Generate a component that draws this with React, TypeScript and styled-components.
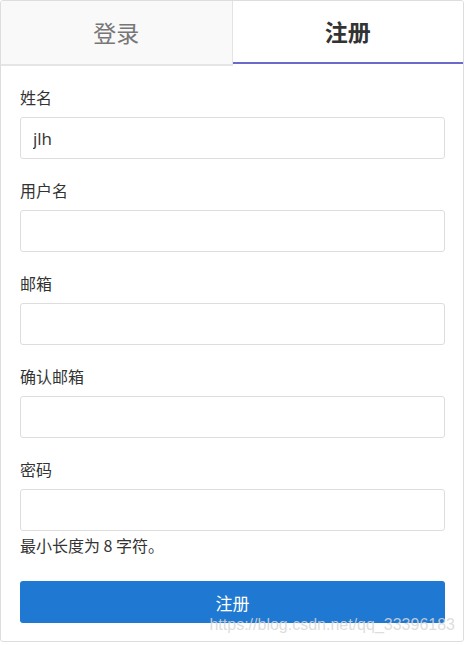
import React from 'react'
import styled, { createGlobalStyle } from 'styled-components'

const GlobalStyle = createGlobalStyle`
  html, body {
    margin: 0;
    padding: 0;
    background: #fff;
  }
  body {
    font-family: "Open Sans", "Noto Sans CJK SC", sans-serif;
    color: #333;
  }
  * {
    box-sizing: border-box;
  }
`

const Card = styled.div`
  position: relative;
  width: 464px;
  height: 642px;
  border: 1px solid #ddd;
  border-radius: 3px;
  background: #fff;
  overflow: hidden;
`

const TabBar = styled.div`
  display: flex;
  align-items: flex-start;
  height: 65px;
`

const Tab = styled.div<{ $active?: boolean }>`
  flex: 1;
  display: flex;
  align-items: center;
  justify-content: center;
  height: ${(p) => (p.$active ? '63px' : '65px')};
  background: ${(p) => (p.$active ? '#fff' : '#f9f9f9')};
  border-right: ${(p) => (p.$active ? 'none' : '1px solid #e3e3e3')};
  border-bottom: 2px solid ${(p) => (p.$active ? '#6a6acb' : '#e5e5e5')};
  font-family: "Noto Sans CJK SC", sans-serif;
  font-size: 23px;
  font-weight: ${(p) => (p.$active ? 700 : 400)};
  color: ${(p) => (p.$active ? '#333' : '#777')};
  padding-bottom: 2px;
`

const Form = styled.form`
  display: flex;
  flex-direction: column;
  padding: 20px 18px 0 19px;
`

const Field = styled.div<{ $last?: boolean }>`
  display: flex;
  flex-direction: column;
  margin-bottom: ${(p) => (p.$last ? '25px' : '20px')};
`

const Label = styled.label`
  font-family: "Noto Sans CJK SC", sans-serif;
  font-size: 16px;
  line-height: 22px;
  color: #333;
  margin-bottom: 9px;
`

const Input = styled.input`
  height: 42px;
  width: 100%;
  border: 1px solid #ddd;
  border-radius: 3px;
  padding: 0 12px;
  font-family: "Open Sans", "Noto Sans CJK SC", sans-serif;
  font-size: 17px;
  color: #333;
  outline: none;
`

const Help = styled.div`
  font-family: "Noto Sans CJK SC", sans-serif;
  font-size: 16px;
  line-height: 22px;
  color: #333;
  margin-top: 3px;
`

const SubmitButton = styled.button`
  height: 42px;
  width: 100%;
  border: none;
  border-radius: 3px;
  background: #1f78d1;
  color: #fff;
  font-family: "Noto Sans CJK SC", sans-serif;
  font-size: 17px;
  cursor: pointer;
`

const Watermark = styled.div`
  position: absolute;
  right: 8px;
  bottom: 7px;
  font-family: "Liberation Sans", Arial, sans-serif;
  font-size: 16px;
  color: rgba(215, 215, 215, 0.85);
  pointer-events: none;
`

const fields = [
  { label: '姓名', value: 'jlh' },
  { label: '用户名', value: '' },
  { label: '邮箱', value: '' },
  { label: '确认邮箱', value: '' },
]

const App: React.FC = () => {
  return (
    <>
      <GlobalStyle />
      <Card>
        <TabBar>
          <Tab>登录</Tab>
          <Tab $active>注册</Tab>
        </TabBar>
        <Form onSubmit={(e) => e.preventDefault()}>
          {fields.map((f) => (
            <Field key={f.label}>
              <Label>{f.label}</Label>
              <Input type="text" defaultValue={f.value} />
            </Field>
          ))}
          <Field $last>
            <Label>密码</Label>
            <Input type="password" />
            <Help>最小长度为 8 字符。</Help>
          </Field>
          <SubmitButton type="submit">注册</SubmitButton>
        </Form>
        <Watermark>https://blog.csdn.net/qq_33396183</Watermark>
      </Card>
    </>
  )
}

export default App
